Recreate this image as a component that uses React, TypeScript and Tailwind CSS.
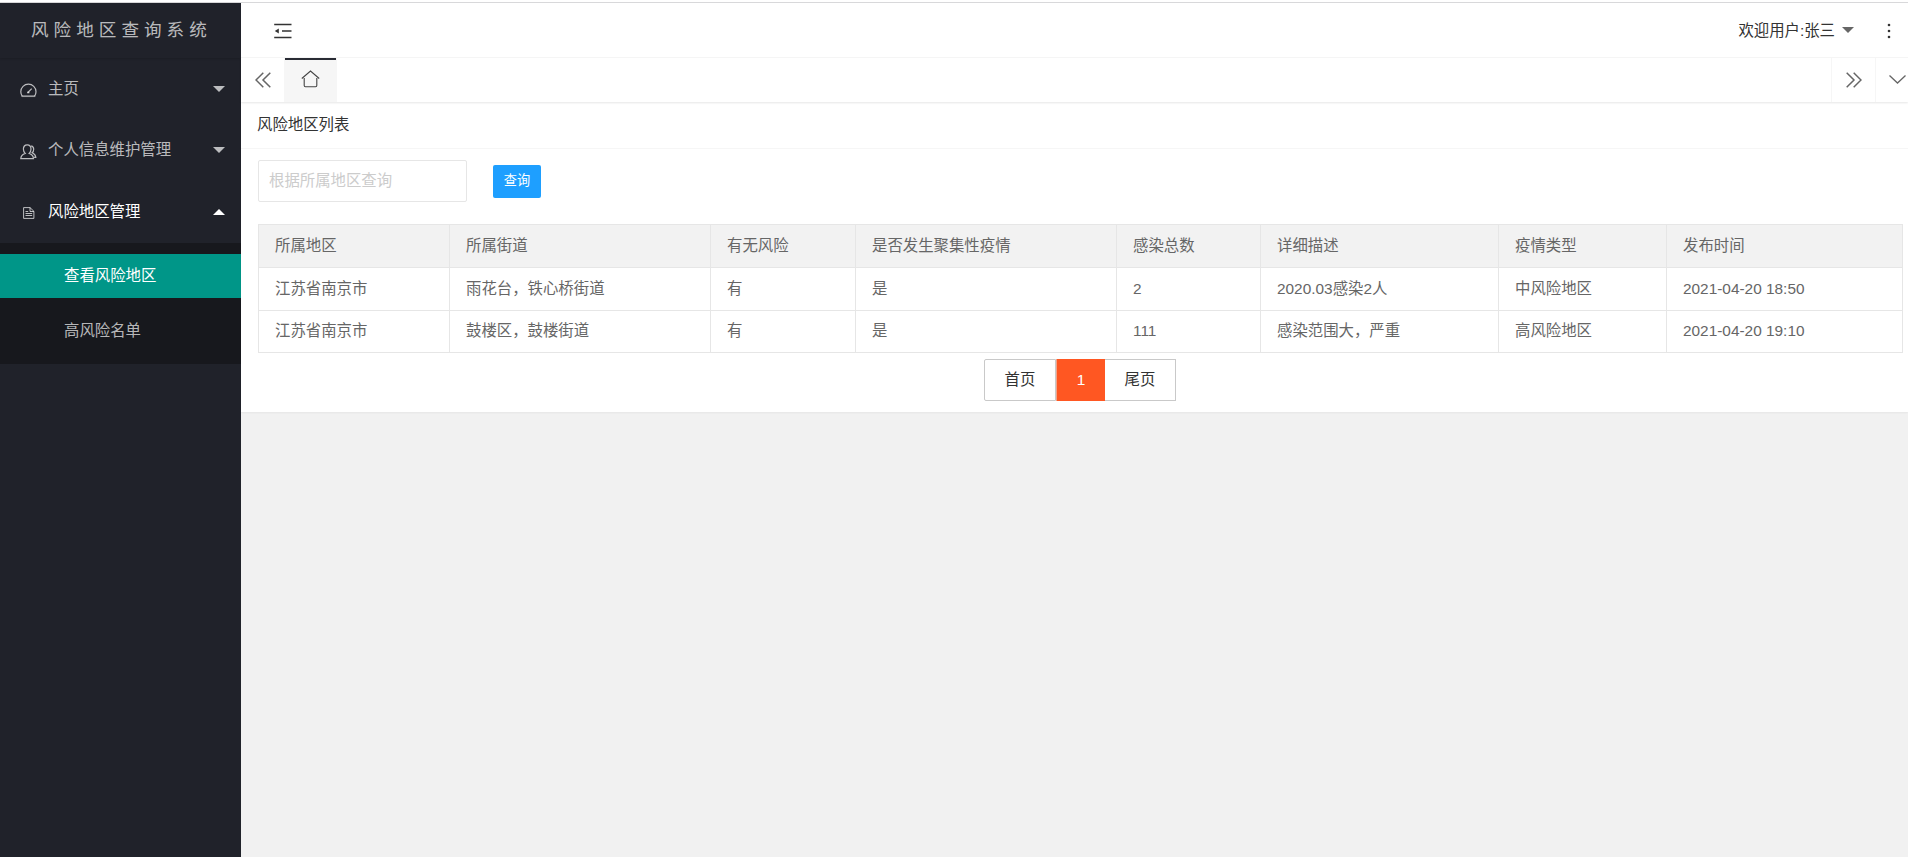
import { useState } from 'react'

interface RiskArea {
  region:  string
  street:  string
  risk:    string
  cluster: string
  total:   string
  detail:  string
  level:   string
  time:    string
}

const COLUMNS = [
  { key: 'region',  title: '所属地区',         width: 'w-[191px]' },
  { key: 'street',  title: '所属街道',         width: 'w-[261px]' },
  { key: 'risk',    title: '有无风险',         width: 'w-[145px]' },
  { key: 'cluster', title: '是否发生聚集性疫情', width: 'w-[261px]' },
  { key: 'total',   title: '感染总数',         width: 'w-[144px]' },
  { key: 'detail',  title: '详细描述',         width: 'w-[238px]' },
  { key: 'level',   title: '疫情类型',         width: 'w-[168px]' },
  { key: 'time',    title: '发布时间',         width: 'w-[236px]' },
] as const

const ROWS: RiskArea[] = [
  { region: '江苏省南京市', street: '雨花台，铁心桥街道', risk: '有', cluster: '是', total: '2',   detail: '2020.03感染2人',   level: '中风险地区', time: '2021-04-20 18:50' },
  { region: '江苏省南京市', street: '鼓楼区，鼓楼街道',   risk: '有', cluster: '是', total: '111', detail: '感染范围大，严重', level: '高风险地区', time: '2021-04-20 19:10' },
]

function Caret({ up = false, className = '' }: { up?: boolean; className?: string }) {
  return (
    <svg width="12" height="6" viewBox="0 0 12 6" className={className} fill="currentColor">
      <path d={up ? 'M0 6 6 0l6 6z' : 'M0 0h12L6 6z'} />
    </svg>
  )
}

function GaugeIcon() {
  return (
    <svg width="17" height="15" viewBox="0 0 17 15" fill="none" stroke="currentColor" strokeWidth="1.2">
      <path d="M2.200 13C1.200 11.700.8 10.300.8 8.800a7.600 7.600 0 0 1 15.200 0c0 1.500-.4 2.900-1.400 4.200" />
      <path d="M1.500 13.200h13.800" strokeWidth="1.700" strokeOpacity=".8" />
      <path d="M7.700 9.600 11.700 5.600" strokeWidth="1.300" />
      <path d="M7.200 9.500h2.200" strokeWidth="1.600" />
    </svg>
  )
}

function UsersIcon() {
  return (
    <svg width="17" height="16" viewBox="0 0 17 16" fill="none" stroke="currentColor" strokeWidth="1.2">
      <path d="M5.200 9.400C4 8.400 3.400 6.800 3.400 5.100 3.400 2.500 5 .9 7.200.9S11 2.500 11 5.100c0 1.700-.6 3.300-1.800 4.300 2.500.8 4.100 2.200 4.300 5.200H.8c.2-3 1.900-4.400 4.400-5.200z" />
      <path d="M11.200 1.800c1.700.5 2.500 1.700 2.500 3.400 0 1.500-.5 2.700-1.500 3.500 2.200.9 3.400 2.300 3.600 4.700h-1.700" />
    </svg>
  )
}

function FileIcon() {
  return (
    <svg width="12" height="12" viewBox="0 0 12 12" fill="none" stroke="currentColor">
      <path d="M.6.600h6.400l3.900 3.700v7.100H.600z" />
      <path d="M7 .600v3.900h3.900M2.500 4.500h2.700M2.500 6.500h6.700M2.500 8.500h6.700" />
    </svg>
  )
}

function ShrinkIcon() {
  return (
    <svg width="18" height="16" viewBox="0 0 18 16" fill="none" stroke="currentColor" strokeWidth="1.700">
      <path d="M.2 1.500h17.300M8 8h9.500M.2 14.500h17.300" />
      <path d="M.8 8 4.800 5.400v5.200z" fill="currentColor" stroke="none" />
    </svg>
  )
}

function HomeIcon() {
  return (
    <svg width="20" height="18" viewBox="0 0 20 18" fill="none" stroke="currentColor" strokeWidth="1.100">
      <path d="M.8 8.500 9.500 1l8.700 7.500M3.200 8v7.500c0 .8.500 1.200 1.200 1.200h10.200c.7 0 1.200-.4 1.200-1.200V8" />
    </svg>
  )
}

function DoubleChevron({ flip = false }: { flip?: boolean }) {
  return (
    <svg width="16" height="16" viewBox="0 0 16 16" fill="none" stroke="currentColor" strokeWidth="1.500">
      <path d={flip ? 'M.7.700 8 8 .7 15.300M7.700.700 15 8l-7.300 7.300' : 'M8.300.700 1 8l7.300 7.300M15.300.700 8 8l7.300 7.300'} />
    </svg>
  )
}

function NavItem({ icon, label, open = false, onClick }: {
  icon: React.ReactNode
  label: string
  open?: boolean
  onClick?: () => void
}) {
  return (
    <button onClick={onClick} className={`flex w-full items-center pr-4 pl-5 ${open ? 'h-[62px] pb-[1px] text-white' : 'h-[61.500px] text-white/70'}`}>
      <span className="flex w-7 items-center pt-[3px] text-white/70">{icon}</span>
      <span className="flex-1 text-left">{label}</span>
      <Caret up={open} />
    </button>
  )
}

function Sidebar() {
  const [open, setOpen] = useState(true)

  return (
    <aside className="w-[241px] shrink-0 bg-[#20222a]">
      <div className="flex h-[55px] items-center pb-[2px] pl-[31px] text-[17.600px] tracking-[5px] whitespace-nowrap text-white/70 shadow-[0_1px_2px_0_rgba(0,0,0,0.15)]">
        风险地区查询系统
      </div>
      <NavItem icon={<GaugeIcon />} label="主页" />
      <NavItem icon={<UsersIcon />} label="个人信息维护管理" />
      <NavItem icon={<span className="pl-[3px]"><FileIcon /></span>} label="风险地区管理" open={open} onClick={() => setOpen(o => !o)} />
      {open && (
        <div className="h-[121px] bg-[#17181d] pt-[11px]">
          <div className="flex h-11 items-center bg-[#009688] pl-16 text-white">查看风险地区</div>
          <div className="mt-[11px] flex h-11 items-center pl-16 text-white/70">高风险名单</div>
        </div>
      )}
    </aside>
  )
}

function TopBar() {
  return (
    <header className="flex h-[55px] items-center border-b border-[#f6f6f6] bg-white pb-[1px] pl-[33px] text-[#333]">
      <div className="pt-[3px]"><ShrinkIcon /></div>
      <div className="ml-auto flex items-center pr-[17px]">
        <span className="pt-[2px]">欢迎用户:张三</span>
        <Caret className="ml-[7px] text-[#666]" />
        <svg width="4" height="16" viewBox="0 0 4 16" className="mt-[3px] ml-[33px]" fill="currentColor">
          <circle cx="2" cy="2" r="1.300" />
          <circle cx="2" cy="8" r="1.300" />
          <circle cx="2" cy="14" r="1.300" />
        </svg>
      </div>
    </header>
  )
}

function TabBar() {
  return (
    <div className="relative flex h-[44px] bg-white text-[#666] shadow-[0_1px_2px_0_rgba(0,0,0,0.1)]">
      <div className="flex w-[43px] items-center pb-[1px] pl-[14px]"><DoubleChevron /></div>
      <div className="flex w-[53px] flex-col items-center bg-[#f6f6f6] text-[#444]">
        <div className="h-[2px] w-[51px] bg-[#292b34]" />
        <div className="pt-[10px]"><HomeIcon /></div>
      </div>
      <div className="ml-auto flex w-[44px] items-center border-l border-[#f6f6f6] pb-[1px] pl-[14px]">
        <DoubleChevron flip />
      </div>
      <div className="flex w-[33px] items-center border-l border-[#f6f6f6] pb-[1px] pl-[13px]">
        <svg width="17" height="9" viewBox="0 0 17 9" fill="none" stroke="currentColor" strokeWidth="1.300">
          <path d="M.5.500 8.500 8l8-7.500" />
        </svg>
      </div>
    </div>
  )
}

function RiskTable() {
  return (
    <table className="w-[1645px] table-fixed border-separate border-spacing-0 border-t border-l border-[#e6e6e6] text-left text-[#666]">
      <thead>
        <tr className="h-[43px] bg-[#f2f2f2]">
          {COLUMNS.map(c => (
            <th key={c.key} className={`${c.width} border-r border-b border-[#e6e6e6] p-0 pl-4 font-normal`}>{c.title}</th>
          ))}
        </tr>
      </thead>
      <tbody>
        {ROWS.map((row, i) => (
          <tr key={row.time} className={i === 0 ? 'h-[43px]' : 'h-[42px]'}>
            {COLUMNS.map(c => (
              <td key={c.key} className="border-r border-b border-[#e6e6e6] p-0 pb-[1px] pl-4">{row[c.key]}</td>
            ))}
          </tr>
        ))}
      </tbody>
    </table>
  )
}

function Pager() {
  return (
    <div className="mt-[6px] ml-[726px] flex h-[42px] w-[192px] text-[#333]">
      <button className="w-[72px] rounded-l-[2px] border border-[#c9c9c9]">首页</button>
      <span className="flex w-[49px] items-center justify-center border-l border-[#f0a58c] bg-[#ff5722] text-white">1</span>
      <button className="w-[71px] border border-l-0 border-[#c9c9c9]">尾页</button>
    </div>
  )
}

export default function App() {
  const [query, setQuery] = useState('')

  return (
    <div className="flex h-[857px] w-[1908px] flex-col overflow-hidden bg-white font-['Liberation_Sans','Noto_Sans_CJK_SC',sans-serif] text-[15.400px] leading-6">
      <div className="h-[3px] shrink-0 border-b border-[#d8d8da]" />
      <div className="flex flex-1">
        <Sidebar />
        <div className="flex-1 bg-[#f1f1f1]">
          <TopBar />
          <TabBar />
          <section className="h-[310px] bg-white shadow-[0_1px_2px_0_rgba(0,0,0,0.05)]">
            <h2 className="flex h-[47px] items-center border-b border-[#f6f6f6] pl-4 text-[#333]">风险地区列表</h2>
            <div className="pt-[11px] pl-[17px]">
              <div className="flex h-[42px] items-center">
                <input
                  value={query}
                  onChange={e => setQuery(e.target.value)}
                  placeholder="根据所属地区查询"
                  className="h-[42px] w-[209px] rounded-[2px] border border-[#e6e6e6] pl-[10px] text-[#333] outline-none placeholder:text-[#ccc]"
                />
                <button className="ml-[26px] h-[33px] w-12 rounded-[2px] bg-[#1e9fff] text-[13.200px] text-white">查询</button>
              </div>
              <div className="pt-[22px]">
                <RiskTable />
                <Pager />
              </div>
            </div>
          </section>
        </div>
      </div>
    </div>
  )
}
